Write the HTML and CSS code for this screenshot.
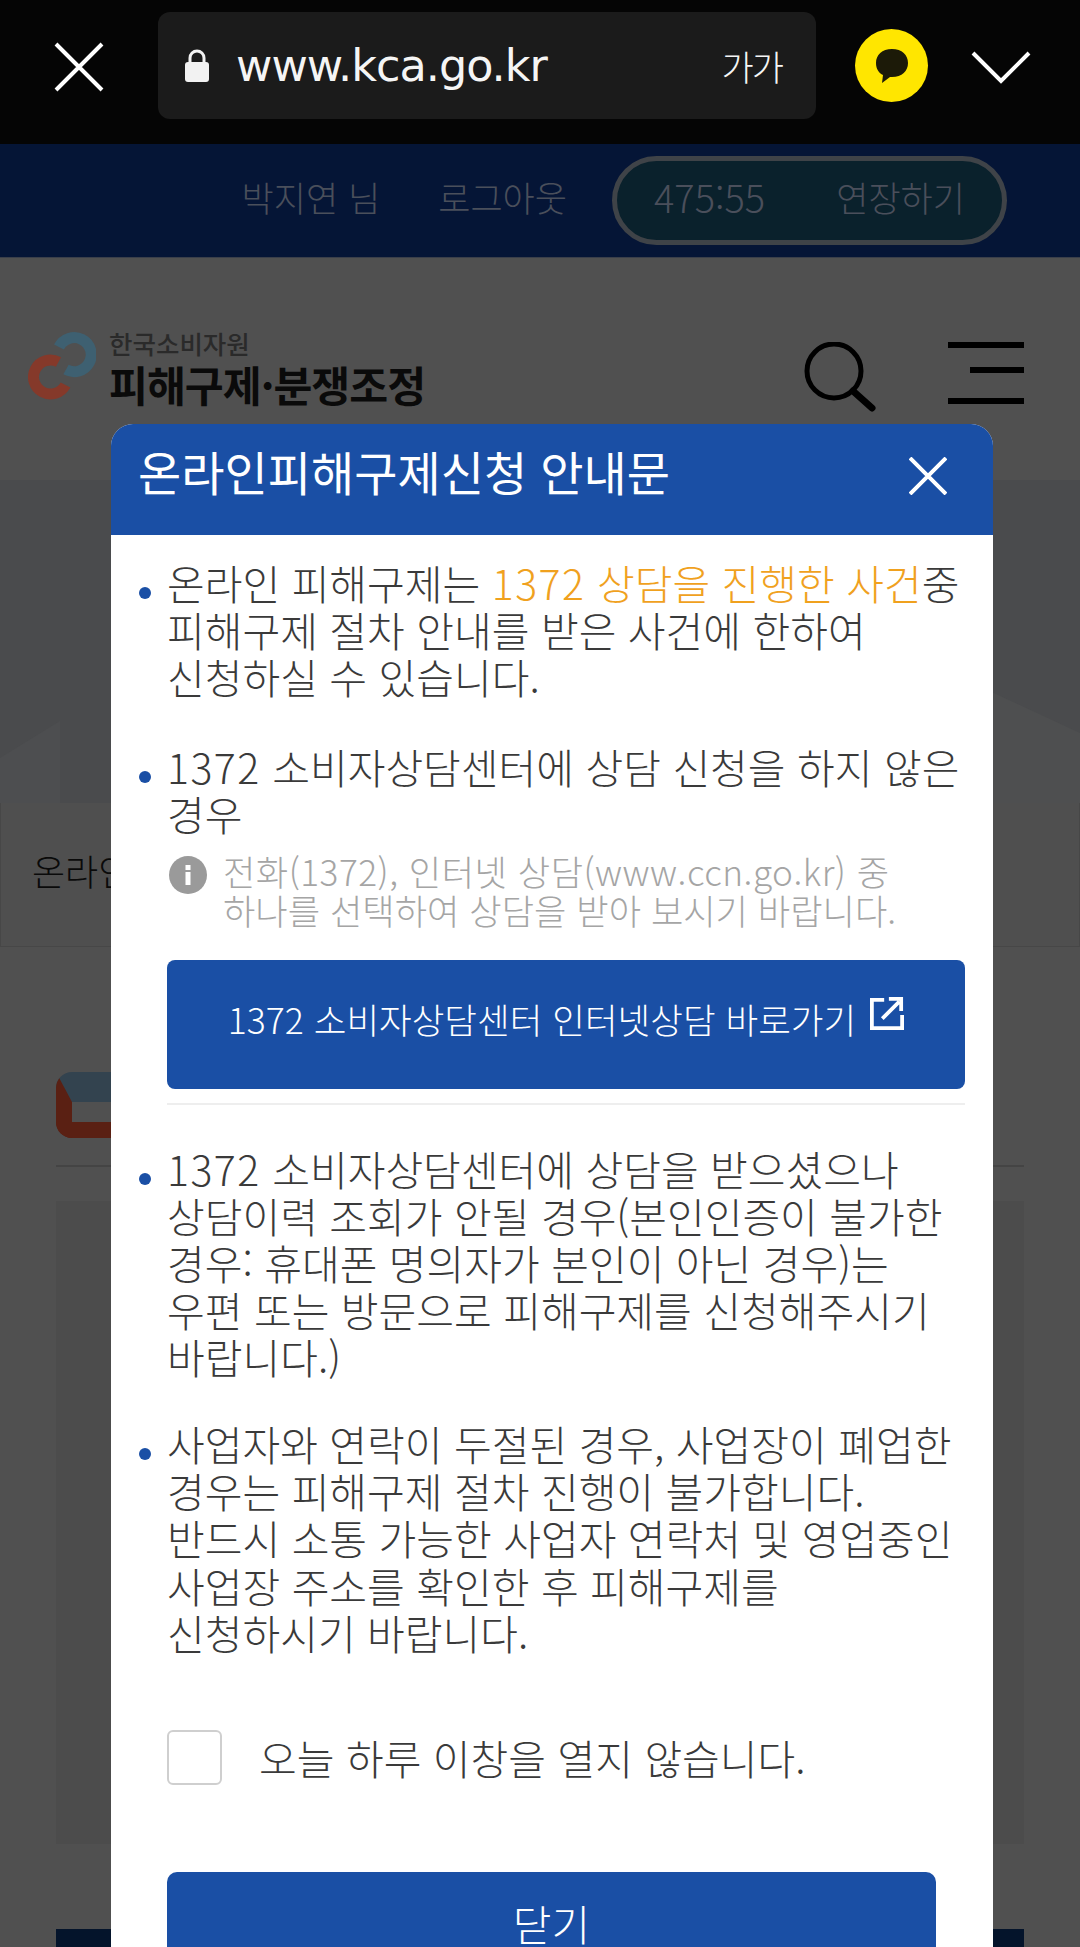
FILE: index.html
```html
<!DOCTYPE html>
<html lang="ko">
<head>
    <meta charset="UTF-8">
    <meta name="viewport" content="width=device-width, initial-scale=1.0">
    <title>온라인피해구제신청 안내문</title>
    <link rel="stylesheet" href="styles.css">
</head>
<body>

<div class="browser-bar">
    <svg class="bar-close" width="50" height="50" viewBox="0 0 50 50"><path d="M2 2L48 48M48 2L2 48" stroke="#fff" stroke-width="4" fill="none"/></svg>
    <div class="url-box">
        <svg class="lock" width="30" height="34" viewBox="0 0 30 34"><path d="M8 14V9a7 7 0 0 1 14 0v5" stroke="#f2f2f2" stroke-width="3" fill="none"/><rect x="3" y="13" width="24" height="20" rx="3" fill="#f2f2f2"/></svg>
        <span class="url-text">www.kca.go.kr</span>
        <span class="font-size">가가</span>
    </div>
    <div class="talk-icon">
        <svg width="36" height="36" viewBox="0 0 36 36"><path d="M18 1C8 1 2 7 2 15c0 6 3 10 7 12l-1 8 8-6h2c10 0 16-6 16-14S28 1 18 1z" fill="#1c1a08"/></svg>
    </div>
    <svg class="bar-chevron" width="60" height="34" viewBox="0 0 60 34"><path d="M2 3L30 31L58 3" stroke="#fff" stroke-width="4" fill="none"/></svg>
</div>

<div class="user-bar">
    <span class="user-name">박지연 님</span>
    <span class="logout">로그아웃</span>
    <div class="timer">
        <span class="time-left">475:55</span>
        <span>연장하기</span>
    </div>
</div>

<div class="site-header">
    <div class="logo">
        <svg width="68" height="68" viewBox="0 0 68 68">
            <path d="M31 15A17 17 0 1 1 38 37.5" stroke="#3e6071" stroke-width="11" fill="none"/>
            <path d="M37.5 53A17 17 0 1 1 30.5 30" stroke="#85392a" stroke-width="11" fill="none"/>
        </svg>
        <div class="logo-text">
            <div class="logo-small">한국소비자원</div>
            <div class="logo-big">피해구제·분쟁조정</div>
        </div>
    </div>
    <div class="header-icons">
        <svg width="72" height="70" viewBox="0 0 72 70"><circle cx="30" cy="29" r="27" stroke="#000" stroke-width="5" fill="none"/><path d="M49 49L68 66" stroke="#000" stroke-width="7" stroke-linecap="round" fill="none"/></svg>
        <div class="menu-icon">
            <i class="line-full"></i>
            <i class="line-short"></i>
            <i class="line-full"></i>
        </div>
    </div>
</div>

<div class="page-bg">
    <div class="hero">
        <svg width="1080" height="323" viewBox="0 0 1080 323"><polygon points="0,278 60,241 60,323 0,323" fill="#4d4e50"/><polygon points="985,209 1080,253 1080,323 985,323" fill="#4e4f50"/></svg>
    </div>
    <div class="tab-row"><span>온라인</span></div>
    <div class="section">
        <div class="section-title"><i class="section-mark"></i></div>
        <div class="section-box"></div>
        <div class="section-foot"></div>
    </div>
</div>

<div class="modal">
    <div class="modal-head">
        <h1>온라인피해구제신청 안내문</h1>
        <svg width="38" height="38" viewBox="0 0 38 38"><path d="M1 1L37 37M37 1L1 37" stroke="#fff" stroke-width="4" fill="none"/></svg>
    </div>
    <div class="modal-body">
        <div class="note">
            온라인 피해구제는 <span class="accent"><span class="num">1372</span> 상담을 진행한 사건</span>중<br>
            피해구제 절차 안내를 받은 사건에 한하여<br>
            신청하실 수 있습니다.
        </div>
        <div class="note next">
            <span class="num">1372</span> 소비자상담센터에 상담 신청을 하지 않은<br>
            경우
        </div>
        <div class="info">
            <svg width="38" height="38" viewBox="0 0 38 38"><circle cx="19" cy="19" r="19" fill="#9a9a9a"/><rect x="16.5" y="16" width="5" height="13" fill="#fff"/><rect x="16.5" y="9" width="5" height="5" fill="#fff"/></svg>
            <p><span class="info-first">전화(1372), 인터넷 상담(www.ccn.go.kr) 중</span><br>하나를 선택하여 상담을 받아 보시기 바랍니다.</p>
        </div>
        <div class="link-btn">
            <span>1372 소비자상담센터 인터넷상담 바로가기</span>
            <svg width="34" height="34" viewBox="0 0 36 36"><path d="M15 4H2V34H34V20" stroke="#fff" stroke-width="4" fill="none"/><path d="M13 24L31 6M20 3H33V16" stroke="#fff" stroke-width="4" fill="none"/></svg>
        </div>
        <div class="divider"></div>
        <div class="note">
            <span class="num">1372</span> 소비자상담센터에 상담을 받으셨으나<br>
            상담이력 조회가 안될 경우(본인인증이 불가한<br>
            경우: 휴대폰 명의자가 본인이 아닌 경우)는<br>
            우편 또는 방문으로 피해구제를 신청해주시기<br>
            바랍니다.)
        </div>
        <div class="note last">
            사업자와 연락이 두절된 경우, 사업장이 폐업한<br>
            경우는 피해구제 절차 진행이 불가합니다.<br>
            반드시 소통 가능한 사업자 연락처 및 영업중인<br>
            사업장 주소를 확인한 후 피해구제를<br>
            신청하시기 바랍니다.
        </div>
        <label class="today">
            <span class="check"></span>
            <span>오늘 하루 이창을 열지 않습니다.</span>
        </label>
        <div class="close-btn">닫기</div>
    </div>
</div>

</body>
</html>
```

FILE: styles.css
```css
html, body {
    margin: 0;
    height: 1947px;
    overflow: hidden;
}
body {
    position: relative;
    width: 1080px;
    background-color: #505050;
    font-family: "Noto Sans CJK KR", "Noto Sans", sans-serif;
    font-weight: 300;
}

/* browser toolbar */
.browser-bar {
    height: 144px;
    padding: 12px 46px 0 54px;
    box-sizing: border-box;
    background-color: #050505;
    display: flex;
    align-items: flex-start;
}
.bar-close {
    margin-top: 30px;
    flex: none;
}
.url-box {
    width: 658px;
    height: 107px;
    margin-left: 54px;
    padding: 0 34px 0 24px;
    box-sizing: border-box;
    background-color: #1b1b1b;
    border-radius: 12px;
    display: flex;
    align-items: center;
    color: #f5f5f5;
    flex: none;
}
.lock {
    flex: none;
}
.url-text {
    margin-left: 24px;
    font-family: "DejaVu Sans", sans-serif;
    font-size: 44.5px;
    font-weight: 400;
    letter-spacing: -1px;
    flex: 1;
}
.font-size {
    font-size: 35px;
    letter-spacing: -2px;
}
.talk-icon {
    width: 73px;
    height: 73px;
    margin: 17px 0 0 39px;
    background-color: #ffe600;
    border-radius: 50%;
    display: flex;
    align-items: center;
    justify-content: center;
    flex: none;
}
.bar-chevron {
    margin: 38px 0 0 43px;
    flex: none;
}

/* dimmed page behind the modal */
.user-bar {
    height: 114px;
    padding-right: 73px;
    box-sizing: border-box;
    background-color: #051536;
    border-bottom: 1px solid #3a3f4a;
    display: flex;
    align-items: center;
    justify-content: flex-end;
    color: #4a4f5b;
    font-size: 35px;
}
.user-bar span {
    padding-bottom: 8px;
}
.logout {
    margin-left: 58px;
}
.timer {
    width: 395px;
    height: 89px;
    margin-left: 45px;
    padding: 0 37px;
    box-sizing: border-box;
    background-color: #0a212c;
    border: 5px solid #3f4348;
    border-radius: 45px;
    display: flex;
    align-items: center;
    justify-content: space-between;
}
.time-left {
    font-size: 38px;
}
.site-header {
    height: 222px;
    padding: 74px 56px 0 28px;
    box-sizing: border-box;
    display: flex;
    justify-content: space-between;
}
.logo {
    display: flex;
    align-items: flex-start;
}
.logo-text {
    margin: -5px 0 0 13px;
    color: #0a0a0a;
}
.logo-small {
    font-size: 25.5px;
    font-weight: 500;
    line-height: 32px;
    color: #2a2a2a;
}
.logo-big {
    font-size: 42.3px;
    font-weight: 700;
    line-height: 50px;
    letter-spacing: -1px;
}
.header-icons {
    display: flex;
    gap: 72px;
    margin-top: 10px;
}
.menu-icon {
    width: 76px;
    display: flex;
    flex-direction: column;
    align-items: flex-end;
}
.menu-icon i {
    display: block;
    height: 6px;
    background-color: #000;
}
.line-full {
    width: 76px;
}
.line-short {
    width: 54px;
    margin: 19px 0 25px;
}
.page-bg {
    height: 1467px;
    background-color: #4a4b4d;
}
.hero {
    height: 323px;
}
.hero svg {
    display: block;
}
.tab-row {
    height: 144px;
    box-sizing: border-box;
    padding: 43px 0 0 31px;
    background-color: #4f4f4f;
    font-size: 36px;
    line-height: 48px;
    color: #0a0a0a;
    border: 1px solid #474747;
    border-top: 0;
}
.section {
    padding: 125px 56px 0;
    background-color: #505050;
    height: 1000px;
    box-sizing: border-box;
}
.section-title {
    height: 93px;
    border-bottom: 2px solid #444;
}
.section-mark {
    display: block;
    width: 80px;
    height: 20px;
    border-style: solid;
    border-width: 30px 16px 16px;
    border-color: #33434f #33434f #5a2013 #5a2013;
    border-radius: 16px;
}
.section-box {
    height: 643px;
    margin-top: 34px;
    background-color: #4c4c4c;
}
.section-foot {
    height: 60px;
    margin-top: 85px;
    background-color: #04142b;
}

/* modal */
.modal {
    position: absolute;
    left: 111px;
    top: 424px;
    width: 882px;
    height: 1600px;
    background-color: #fff;
    border-radius: 22px 22px 0 0;
    overflow: hidden;
    color: #3a3a3a;
}
.modal-head {
    height: 111px;
    padding: 0 46px 0 27px;
    box-sizing: border-box;
    background-color: #1a4fa5;
    display: flex;
    justify-content: space-between;
    align-items: flex-start;
}
.modal-head h1 {
    margin: 15px 0 0;
    font-size: 47px;
    font-weight: 400;
    line-height: 64px;
    color: #fff;
}
.modal-head svg {
    margin-top: 33px;
}
.modal-body {
    padding: 24px 28px 0 56px;
}
.note {
    position: relative;
    font-size: 41px;
    line-height: 47.2px;
    white-space: nowrap;
}
.note::before {
    content: "";
    position: absolute;
    left: -28px;
    top: 28px;
    width: 12px;
    height: 12px;
    border-radius: 50%;
    background-color: #1a4fa5;
}
.num {
    letter-spacing: 1.5px;
}
.next {
    margin-top: 42px;
}
.last {
    margin-top: 39.5px;
}
.accent {
    color: #f0a11e;
}
.info {
    display: flex;
    margin-top: 14px;
    padding-left: 2px;
}
.info svg {
    margin-top: 5px;
    flex: none;
}
.info p {
    margin: 0 0 0 16px;
    font-size: 35.2px;
    line-height: 39px;
    color: #a5a5a5;
    white-space: nowrap;
}
.info-first {
    letter-spacing: 0.5px;
}
.link-btn {
    height: 129px;
    margin-top: 31px;
    background-color: #1a4fa5;
    border-radius: 8px;
    display: flex;
    align-items: flex-start;
    justify-content: center;
    color: #fff;
    font-size: 35.5px;
}
.link-btn span {
    margin-top: 34px;
    line-height: 50px;
}
.link-btn svg {
    margin: 36px 0 0 14px;
}
.divider {
    height: 2px;
    margin: 14px 0 39.5px;
    background-color: #eeeeee;
}
.today {
    display: flex;
    align-items: center;
    margin-top: 74px;
    font-size: 41px;
    line-height: 55px;
}
.check {
    width: 55px;
    height: 55px;
    margin-right: 37px;
    box-sizing: border-box;
    border: 2px solid #cfcfcf;
    border-radius: 6px;
}
.close-btn {
    width: 769px;
    height: 130px;
    margin-top: 87px;
    padding-top: 23px;
    box-sizing: border-box;
    background-color: #1a4fa5;
    border-radius: 10px;
    color: #fff;
    font-size: 42px;
    line-height: 56px;
    text-align: center;
}
```
